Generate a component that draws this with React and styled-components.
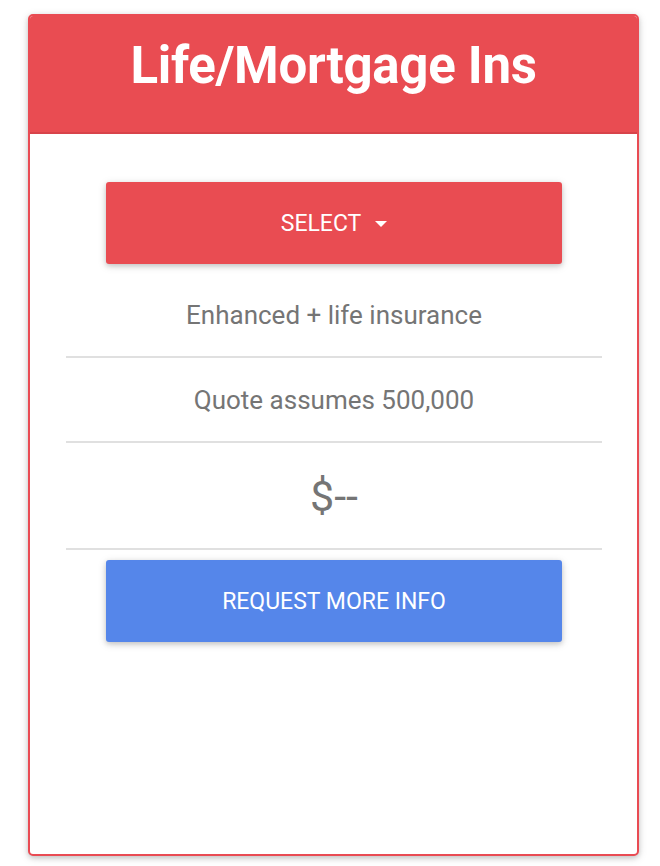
import React from "react";
import styled, { createGlobalStyle } from "styled-components";

const Global = createGlobalStyle`
  html, body { margin: 0; padding: 0; background: #ffffff; }
  body { font-family: Roboto, "Noto Sans", Arial, sans-serif; }
`;

const Page = styled.div`
  padding: 14px 21px 10px 28px;
`;

const Card = styled.div`
  width: 611px;
  height: 842px;
  box-sizing: border-box;
  border: 2px solid #e94b53;
  border-radius: 5px;
  background: #fff;
  box-shadow: 0 2px 5px rgba(0,0,0,0.16), 0 2px 10px rgba(0,0,0,0.12);
  overflow: hidden;
  display: flex;
  flex-direction: column;
`;

const Header = styled.div`
  background: #e94c52;
  height: 118px;
  border-bottom: 2px solid #d8434a;
  display: flex;
  align-items: flex-start;
  justify-content: center;
  margin: -2px -2px 0;
`;

const Title = styled.h1`
  margin: 0;
  padding-top: 22px;
  font-family: Roboto, Arial, sans-serif;
  font-weight: 700;
  font-size: 51px;
  line-height: 60px;
  color: #fff;
  letter-spacing: -0.3px;
`;

const Body = styled.div`
  padding: 48px 35px 0 36px;
  display: flex;
  flex-direction: column;
  align-items: center;
`;

const ActionButton = styled.button`
  width: 456px;
  height: 82px;
  border: none;
  border-radius: 3px;
  background: ${p => p.$color};
  color: #fff;
  font-family: Roboto, Arial, sans-serif;
  font-size: 23px;
  text-transform: uppercase;
  display: flex;
  align-items: center;
  justify-content: center;
  gap: 14px;
  box-shadow: 0 2px 5px rgba(0,0,0,0.16), 0 2px 10px rgba(0,0,0,0.12);
  margin-top: ${p => p.$mt || 0}px;
  cursor: pointer;
  padding: 0;
`;

const Caret = styled.span`
  width: 0;
  height: 0;
  border-left: 6px solid transparent;
  border-right: 6px solid transparent;
  border-top: 6px solid #fff;
  margin-top: 1px;
`;

const Row = styled.div`
  align-self: stretch;
  height: ${p => p.$h}px;
  display: flex;
  align-items: center;
  justify-content: center;
  padding-top: ${p => p.$pt || 0}px;
  box-sizing: border-box;
  border-bottom: 2px solid #e0e0e0;
  color: #757575;
  font-size: ${p => p.$fs || 26}px;
  font-family: Roboto, Arial, sans-serif;
`;

export default function App() {
  return (
    <>
      <Global />
      <Page>
        <Card>
          <Header>
            <Title>Life/Mortgage Ins</Title>
          </Header>
          <Body>
            <ActionButton $color="#e94c52">
              SELECT <Caret />
            </ActionButton>
            <Row $h={94} $pt={10}>Enhanced + life insurance</Row>
            <Row $h={85}>Quote assumes 500,000</Row>
            <Row $h={107} $fs={43} $pt={0}>$--</Row>
            <ActionButton $color="#5586ea" $mt={10}>
              Request more info
            </ActionButton>
          </Body>
        </Card>
      </Page>
    </>
  );
}
